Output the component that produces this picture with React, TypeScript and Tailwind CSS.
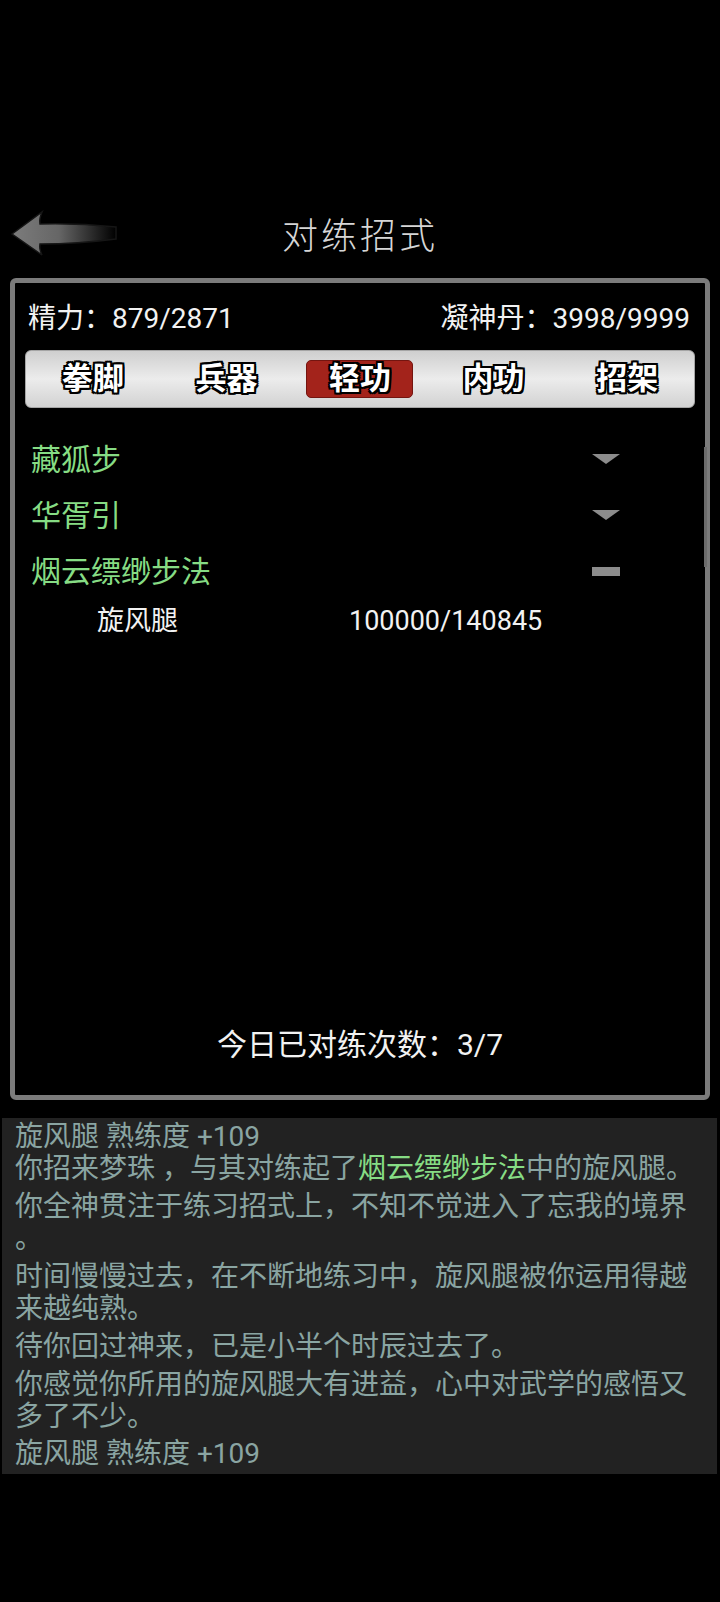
import React from 'react';

const tabs = ['拳脚', '兵器', '轻功', '内功', '招架'];
const outline =
  '[text-shadow:2px_0_0_#000,-2px_0_0_#000,0_2px_0_#000,0_-2px_0_#000,2px_2px_0_#000,-2px_-2px_0_#000,2px_-2px_0_#000,-2px_2px_0_#000]';

function BackArrow() {
  return (
    <svg width="112" height="50" viewBox="0 0 112 50">
      <defs>
        <linearGradient id="arrowFill" x1="0" y1="0" x2="1" y2="0">
          <stop offset="0" stopColor="#7c7c7c" />
          <stop offset="0.45" stopColor="#666" />
          <stop offset="1" stopColor="#000" />
        </linearGradient>
      </defs>
      <path
        d="M4 26 L34 4 Q31 11 32 16 Q70 15 108 19 L108 31 Q70 36 32 36 Q31 41 34 47 Z"
        fill="url(#arrowFill)"
        stroke="#161616"
        strokeWidth="1.5"
      />
    </svg>
  );
}

function Caret() {
  return (
    <svg width="28" height="10" viewBox="0 0 28 10">
      <path d="M0 0 L28 0 L14 10 Z" fill="#8c8c8c" />
    </svg>
  );
}

const skills = [
  { name: '藏狐步', open: false },
  { name: '华胥引', open: false },
  { name: '烟云缥缈步法', open: true },
];

export default function App() {
  return (
    <div className="w-[720px] h-[1602px] bg-black flex flex-col font-['Roboto','Noto_Sans_CJK_SC',sans-serif]">
      {/* header */}
      <div className="mt-[207px] h-[52px] grid grid-cols-[1fr_auto_1fr] items-center">
        <div className="pl-[8px]">
          <BackArrow />
        </div>
        <div className="text-[36px] leading-none tracking-[3px] text-[#d6d6d6] font-light font-['Noto_Sans_CJK_SC',sans-serif]">
          对练招式
        </div>
        <div />
      </div>

      {/* main panel */}
      <div className="relative mt-[19px] ml-[10px] w-[700px] h-[822px] border-[5px] border-[#7b7b7b] rounded-[6px] flex flex-col">
        <div className="mt-[21px] h-[30px] px-[13px] pr-[15px] flex justify-between items-center text-[28px] text-[#f2f2f2]">
          <span>精力：879/2871</span>
          <span>凝神丹：3998/9999</span>
        </div>

        <div className="mt-[16px] mx-[10px] h-[58px] rounded-[6px] border border-[#a5a5a5] bg-linear-to-b from-[#cfcfcf] via-[#ececec] to-[#d2d2d2] grid grid-cols-5 items-center">
          {tabs.map((t) => (
            <div key={t} className="flex justify-center">
              <div
                className={
                  'w-[107px] h-[38px] rounded-[5px] flex items-center justify-center text-[31px] font-bold text-white ' +
                  outline +
                  (t === '轻功' ? ' bg-[#a3231b] border border-[#741510]' : '')
                }
              >
                {t}
              </div>
            </div>
          ))}
        </div>

        <div className="mt-[23px] flex flex-col">
          {skills.map((s) => (
            <div key={s.name} className="h-[56px] pl-[16px] pr-[85px] flex items-center justify-between">
              <span className="text-[30px] text-[#86dc84]">{s.name}</span>
              {s.open ? <div className="w-[28px] h-[9px] bg-[#8c8c8c]" /> : <Caret />}
            </div>
          ))}
          <div className="h-[44px] pl-[82px] grid grid-cols-[252px_1fr] items-center text-[27px] text-[#f2f2f2]">
            <span>旋风腿</span>
            <span>100000/140845</span>
          </div>
        </div>

        <div className="mt-auto mb-[31px] h-[40px] flex items-center justify-center text-[30px] text-[#f2f2f2]">
          今日已对练次数：3/7
        </div>

        {/* scroll thumb */}
        <div className="absolute right-[-2px] top-[164px] w-[3px] h-[120px] bg-[#6b6b6b]" />
      </div>

      {/* log */}
      <div className="mt-[18px] ml-[2px] w-[715px] h-[356px] bg-[#222222] pt-[3px] pl-[13px] text-[28px] leading-[32px] text-[#8aa5a2] whitespace-nowrap">
        <div>旋风腿 熟练度 +109</div>
        <div>
          你招来梦珠 ，与其对练起了<span className="text-[#86dc84]">烟云缥缈步法</span>中的旋风腿。
        </div>
        <div className="mt-[6px]">
          <div>你全神贯注于练习招式上，不知不觉进入了忘我的境界</div>
          <div>。</div>
        </div>
        <div className="mt-[6px]">
          <div>时间慢慢过去，在不断地练习中，旋风腿被你运用得越</div>
          <div>来越纯熟。</div>
        </div>
        <div className="mt-[6px]">待你回过神来，已是小半个时辰过去了。</div>
        <div className="mt-[6px]">
          <div>你感觉你所用的旋风腿大有进益，心中对武学的感悟又</div>
          <div>多了不少。</div>
        </div>
        <div className="mt-[5px]">旋风腿 熟练度 +109</div>
      </div>
    </div>
  );
}
